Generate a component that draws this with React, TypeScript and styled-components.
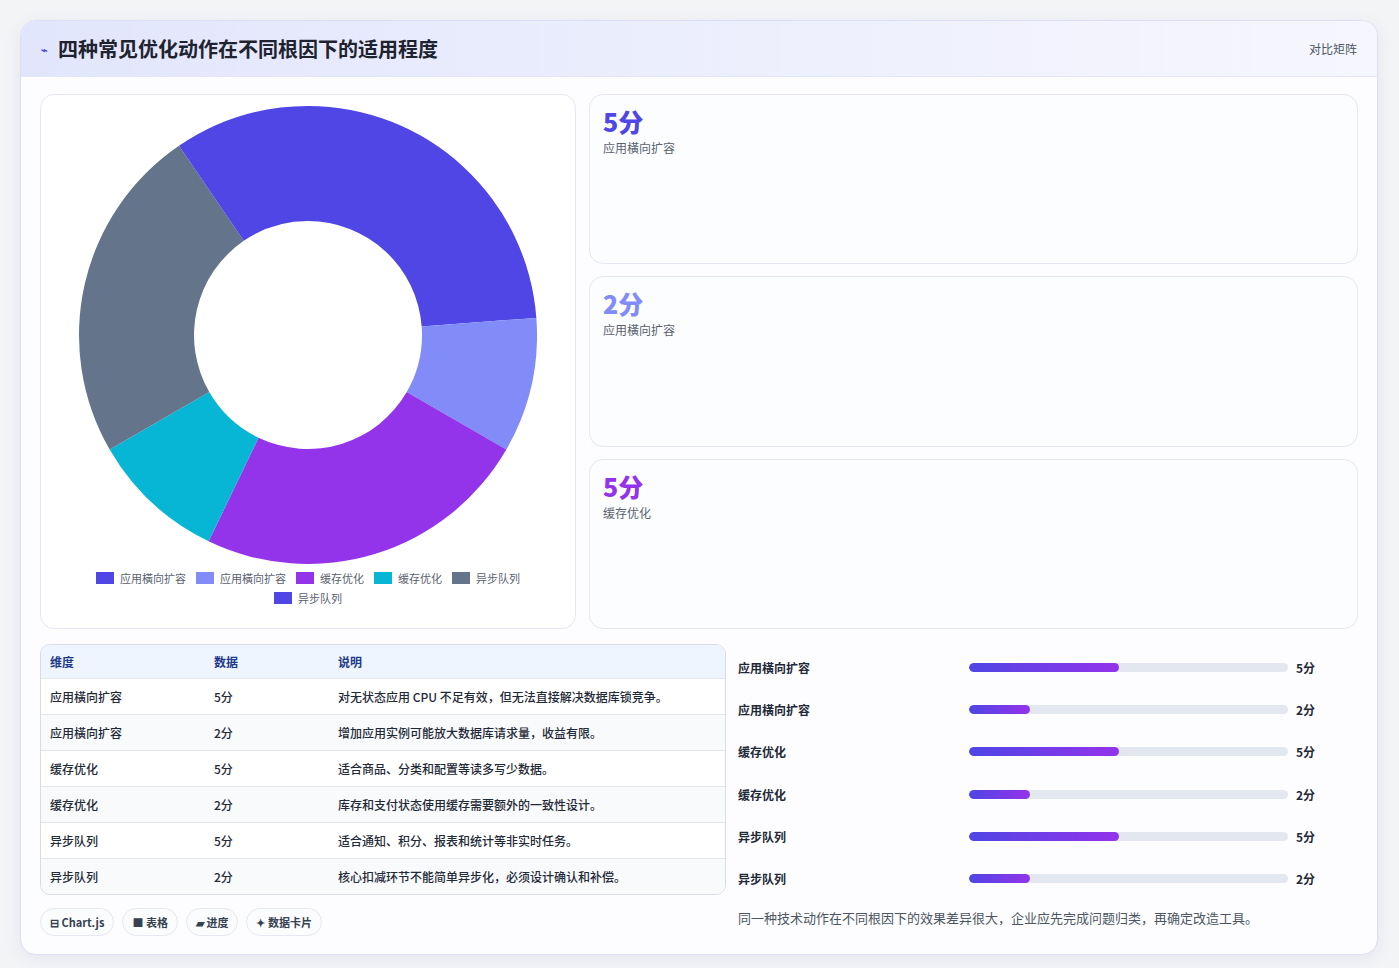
import React from "react";
import styled, { createGlobalStyle } from "styled-components";

const G = createGlobalStyle`
  body { margin:0; background:#f3f4f6; font-family: "Noto Sans CJK SC", "Noto Sans", sans-serif; }
`;
const Page = styled.div`padding:20px 21px 21px 20px;`;
const Card = styled.div`
  background:#fdfdff; border:1px solid #dcdff5; border-radius:16px; overflow:hidden;
  box-shadow:0 4px 18px rgba(80,80,160,0.08);
`;
const Header = styled.div`
  height:55px; display:flex; align-items:center; justify-content:space-between; padding:0 20px;
  background:linear-gradient(90deg,#e2e6fc,#eef0fd 60%,#f6f6fd);
  border-bottom:1px solid #e4e7f7;
`;
const Title = styled.h1`margin:0; font-size:20px; font-weight:700; color:#1f2330; display:flex; align-items:center; gap:10px;`;
const Tag = styled.span`font-size:12px; color:#4b5563;`;
const Body = styled.div`padding:17px 19px 18px 19px; display:flex; flex-direction:column; gap:15px;`;
const Top = styled.div`display:grid; grid-template-columns:536px 1fr; gap:13px; height:535px;`;
const Panel = styled.div`background:#fff; border:1px solid #e5e8f3; border-radius:14px; display:flex; flex-direction:column; align-items:center;`;
const Legend = styled.div`display:flex; flex-wrap:wrap; justify-content:center; gap:4px 10px; width:470px; margin-top:6px;`;
const LItem = styled.span`display:flex; align-items:center; gap:6px; font-size:11px; color:#5b6170;`;
const Sw = styled.i<{c:string}>`width:18px; height:12px; background:${p=>p.c}; display:inline-block;`;
const Stats = styled.div`display:grid; grid-template-rows:repeat(3,1fr); gap:12px;`;
const Stat = styled.div`background:#fcfdff; border:1px solid #e5e8f3; border-radius:14px; padding:10px 13px;`;
const Big = styled.div<{c:string}>`font-size:25px; font-weight:800; color:${p=>p.c}; line-height:32px;`;
const Sub = styled.div`font-size:12px; color:#5b6170; margin-top:2px;`;
const Bottom = styled.div`display:grid; grid-template-columns:686px 1fr; gap:12px;`;
const Table = styled.div`border:1px solid #d6dcec; border-radius:10px; overflow:hidden; background:#fff;`;
const Row = styled.div<{h?:boolean; alt?:boolean}>`
  display:grid; grid-template-columns:164px 124px 1fr; align-items:center; padding:0 9px;
  height:${p=>p.h?33:35}px; font-size:12px; font-weight:${p=>p.h?700:500};
  color:${p=>p.h?"#1e3a8a":"#1f2937"}; background:${p=>p.h?"#eef5ff":p.alt?"#f8fafc":"#fff"};
  border-top:${p=>p.h?"none":"1px solid #e2e6ef"};
`;
const Chips = styled.div`display:flex; gap:8px; margin-top:13px;`;
const Chip = styled.span`border:1px solid #e5e8f0; border-radius:15px; padding:5px 9px; font-size:11px; font-weight:700; color:#374151; background:#fbfcfe;`;
const Bars = styled.div`display:flex; flex-direction:column; padding-top:2px;`;
const BarRow = styled.div`display:grid; grid-template-columns:231px 319px 1fr; align-items:center; height:42.3px; gap:0; font-size:12px; font-weight:600; color:#1f2937;`;
const Track = styled.div`height:9px; border-radius:5px; background:#e3e8f0; overflow:hidden;`;
const Fill = styled.div`height:100%; border-radius:5px; background:linear-gradient(90deg,#4f46e5,#9333ea);`;
const Val = styled.span`padding-left:8px; font-weight:700;`;
const Note = styled.div`font-size:13px; color:#4b5563; margin-top:8px;`;

const slices = [
  { v: 5, c: "#4f46e5", l: "应用橫向扩容" },
  { v: 2, c: "#818cf8", l: "应用橫向扩容" },
  { v: 5, c: "#9333ea", l: "缓存优化" },
  { v: 2, c: "#06b6d4", l: "缓存优化" },
  { v: 5, c: "#64748b", l: "异步队列" },
  { v: 2, c: "#4f46e5", l: "异步队列" },
];

function Donut() {
  const cx = 229, cy = 229, R = 229, r = 114;
  let a = -Math.PI / 2;
  const tot = slices.reduce((s, x) => s + x.v, 0);
  return (
    <svg width="458" height="458" style={{ marginTop: 11 }}>
      {slices.map((s, i) => {
        const a2 = a + (s.v / tot) * Math.PI * 2;
        const p = (ang: number, rad: number) => `${cx + rad * Math.cos(ang)} ${cy + rad * Math.sin(ang)}`;
        const large = a2 - a > Math.PI ? 1 : 0;
        const d = `M${p(a, R)} A${R} ${R} 0 ${large} 1 ${p(a2, R)} L${p(a2, r)} A${r} ${r} 0 ${large} 0 ${p(a, r)} Z`;
        a = a2;
        return <path key={i} d={d} fill={s.c} />;
      })}
    </svg>
  );
}

const rows = [
  ["应用橫向扩容", "5分", "对无状态应用 CPU 不足有效，但无法直接解决数据库锁竞争。"],
  ["应用橫向扩容", "2分", "增加应用实例可能放大数据库请求量，收益有限。"],
  ["缓存优化", "5分", "适合商品、分类和配置等读多写少数据。"],
  ["缓存优化", "2分", "库存和支付状态使用缓存需要额外的一致性设计。"],
  ["异步队列", "5分", "适合通知、积分、报表和统计等非实时任务。"],
  ["异步队列", "2分", "核心扣减环节不能简单异步化，必须设计确认和补偿。"],
];

export default function App() {
  return (
    <Page>
      <G />
      <Card>
        <Header>
          <Title><span style={{ fontSize: 11, color: "#4f46e5" }}>⌁</span>四种常见优化动作在不同根因下的适用程度</Title>
          <Tag>对比矩阵</Tag>
        </Header>
        <Body>
          <Top>
            <Panel>
              <Donut />
              <Legend>
                {slices.map((s, i) => <LItem key={i}><Sw c={s.c} />{s.l}</LItem>)}
              </Legend>
            </Panel>
            <Stats>
              <Stat><Big c="#4f46e5">5分</Big><Sub>应用橫向扩容</Sub></Stat>
              <Stat><Big c="#818cf8">2分</Big><Sub>应用橫向扩容</Sub></Stat>
              <Stat><Big c="#9333ea">5分</Big><Sub>缓存优化</Sub></Stat>
            </Stats>
          </Top>
          <Bottom>
            <div>
              <Table>
                <Row h><span>维度</span><span>数据</span><span>说明</span></Row>
                {rows.map((r, i) => <Row key={i} alt={i % 2 === 1}><span>{r[0]}</span><span>{r[1]}</span><span>{r[2]}</span></Row>)}
              </Table>
              <Chips>
                <Chip>⊟ Chart.js</Chip><Chip>■ 表格</Chip><Chip>▰ 进度</Chip><Chip>✦ 数据卡片</Chip>
              </Chips>
            </div>
            <div>
              <Bars>
                {rows.map((r, i) => (
                  <BarRow key={i}>
                    <span>{r[0]}</span>
                    <Track><Fill style={{ width: r[1] === "5分" ? "47%" : "19%" }} /></Track>
                    <Val>{r[1]}</Val>
                  </BarRow>
                ))}
              </Bars>
              <Note>同一种技术动作在不同根因下的效果差异很大，企业应先完成问题归类，再确定改造工具。</Note>
            </div>
          </Bottom>
        </Body>
      </Card>
    </Page>
  );
}
